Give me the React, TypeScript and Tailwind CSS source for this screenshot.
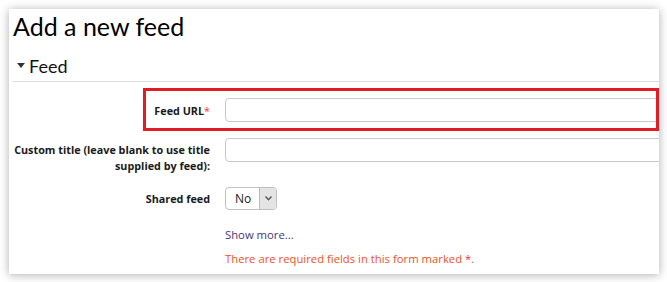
export default function App() {
  const label = "w-[201px] shrink-0 whitespace-nowrap text-[10.8px] font-bold text-[#1a1a1a] text-right leading-[16px]"
  return (
    <div className="w-[667px] h-[282px] bg-white pt-[9px] pl-[9px]" style={{ fontFamily: "'Open Sans', sans-serif" }}>
      <div className="relative w-[650px] h-[265px] bg-white overflow-hidden shadow-[0_1px_9px_rgba(0,0,0,0.32)]">
        {/* Title */}
        <h2 className="pl-[4px] pt-[1px] text-[25px] leading-[32px] text-black" style={{ fontFamily: "Lato, sans-serif" }}>
          Add a new feed
        </h2>

        {/* Legend */}
        <div className="ml-[4px] mt-[8px] flex items-center h-[32px] border-b border-[#dcdcdc]">
          <svg width="8" height="5" viewBox="0 0 8 5" className="ml-[4px] mr-[4px]">
            <path d="M0 0 L8 0 L4 5 Z" fill="#333" />
          </svg>
          <span className="text-[18px] text-[#111] leading-[32px]" style={{ fontFamily: "Lato, sans-serif" }}>Feed</span>
        </div>

        {/* Feed URL */}
        <div className="flex mt-[16px] h-[24px]">
          <div className={`${label} pt-[5px]`}>
            Feed URL<span className="text-[#e33] font-normal">*</span>
          </div>
          <div className="ml-[15px] shrink-0 w-[520px] h-[24px] border border-[#c8c8c8] rounded-[4px] bg-white" />
        </div>
        <div className="absolute left-[134px] top-[79px] w-[516px] h-[43px] border-[3px] border-[#e21b24]" />

        {/* Custom title */}
        <div className="flex mt-[16px] h-[40px]">
          <div className={`${label} pt-[4px]`}>
            Custom title (leave blank to use title<br />supplied by feed):
          </div>
          <div className="ml-[15px] shrink-0 w-[520px] h-[24px] border border-[#c8c8c8] rounded-[4px] bg-white" />
        </div>

        {/* Shared feed */}
        <div className="flex mt-[9px] h-[23px]">
          <div className={`${label} pt-[4px]`}>Shared feed</div>
          <div className="ml-[15px] flex h-[23px] w-[52px] border border-[#c0c0c0] rounded-[4px] overflow-hidden bg-white">
            <span className="flex-1 pl-[9px] text-[12px] leading-[22px] text-[#222]">No</span>
            <span className="w-[17px] border-l border-[#b8b8b8] bg-[#e4e4e4] flex items-center justify-center">
              <svg width="7" height="5" viewBox="0 0 7 5">
                <path d="M0.5 0.5 L3.5 3.8 L6.5 0.5" fill="none" stroke="#555" strokeWidth="1.4" />
              </svg>
            </span>
          </div>
        </div>

        {/* Links */}
        <div className="ml-[216px] mt-[17px] text-[11.3px] leading-[16px] text-[#46347f]">Show more...</div>
        <div className="ml-[216px] mt-[8px] text-[11.3px] leading-[16px] text-[#f4511e]">
          There are required fields in this form marked <span className="text-[#ee3344]">*</span>.
        </div>
      </div>
    </div>
  )
}
